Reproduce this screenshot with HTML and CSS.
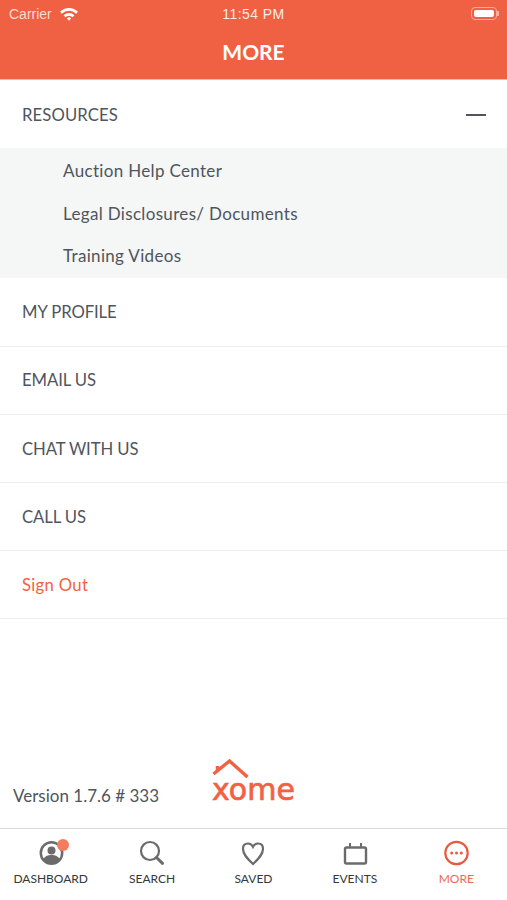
FILE: index.html
```html
<!DOCTYPE html>
<html>
	<head>
		<title>More</title>
		<link rel="stylesheet" href="styles.css">
	</head>
	<body>
		<div class="page">
			<header class="top">
				<div class="status">
					<div class="carrier">
						<span>Carrier</span>
						<svg class="wifi" width="18" height="14" viewBox="0 0 18 14">
							<path d="M0 4.800a12.500 12.500 0 0 1 18 0l-1.800 1.900a10 10 0 0 0-14.400 0z" fill="#fff"/>
							<path d="M3.600 8.300a7.500 7.500 0 0 1 10.800 0l-1.800 1.900a5 5 0 0 0-7.200 0z" fill="#fff"/>
							<path d="M6.900 11.400a3 3 0 0 1 4.200 0L9 13.700z" fill="#fff"/>
						</svg>
					</div>
					<div class="clock">11:54 PM</div>
					<div class="battery"><i></i></div>
				</div>
				<h1>MORE</h1>
			</header>

			<main class="menu">
				<div class="row row-open">
					<span>RESOURCES</span>
					<span class="minus"></span>
				</div>
				<div class="sub">
					<div class="sub-item">Auction Help Center</div>
					<div class="sub-item">Legal Disclosures/ Documents</div>
					<div class="sub-item">Training Videos</div>
				</div>
				<div class="row">MY PROFILE</div>
				<div class="row">EMAIL US</div>
				<div class="row">CHAT WITH US</div>
				<div class="row">CALL US</div>
				<div class="row signout">Sign Out</div>
			</main>

			<div class="about">
				<div class="version">Version 1.7.6 # 333</div>
				<div class="logo">
					<svg class="roof" width="38" height="20" viewBox="0 0 38 20">
						<path d="M1.500 15L17.500 2L35.500 18" fill="none" stroke="#f26144" stroke-width="3.400"/>
						<path d="M5.500 12.500V7" fill="none" stroke="#f26144" stroke-width="3.500"/>
					</svg>
					<div class="logo-word">xome</div>
				</div>
			</div>

			<nav class="tabs">
				<div class="tab">
					<span class="tab-icon">
						<svg width="30" height="30" viewBox="0 0 30 30">
							<circle cx="15.500" cy="15" r="10.700" fill="none" stroke="#6b6b6b" stroke-width="2.500"/>
							<circle cx="15.500" cy="12.500" r="4" fill="#6b6b6b"/>
							<path d="M7 22c1.500-4 5-5 8.500-5s7 1 8.500 5a11 11 0 0 1-17 0z" fill="#6b6b6b"/>
						</svg>
						<span class="dot"></span>
					</span>
					<span>DASHBOARD</span>
				</div>
				<div class="tab">
					<span class="tab-icon">
						<svg width="30" height="30" viewBox="0 0 30 30">
							<circle cx="13" cy="13" r="9" fill="none" stroke="#6b6b6b" stroke-width="2.200"/>
							<path d="M19.500 19.500l6 5.800" fill="none" stroke="#6b6b6b" stroke-width="3" stroke-linecap="round"/>
						</svg>
					</span>
					<span>SEARCH</span>
				</div>
				<div class="tab">
					<span class="tab-icon">
						<svg width="30" height="30" viewBox="0 0 30 30">
							<path d="M15 26C8.500 20 5 16 5 10.800 5 7.300 7.200 5.500 10 5.500c2.300 0 4 1.200 5 3.300 1-2.100 2.700-3.300 5-3.300 2.800 0 5 1.800 5 5.300C25 16 21.500 20 15 26z" fill="none" stroke="#6b6b6b" stroke-width="2.200"/>
						</svg>
					</span>
					<span>SAVED</span>
				</div>
				<div class="tab">
					<span class="tab-icon">
						<svg width="30" height="30" viewBox="0 0 30 30">
							<rect x="5" y="9.500" width="21" height="16" rx="1.500" fill="none" stroke="#6b6b6b" stroke-width="2.400"/>
							<path d="M10 5v5M21 5v5" stroke="#6b6b6b" stroke-width="2"/>
						</svg>
					</span>
					<span>EVENTS</span>
				</div>
				<div class="tab tab-on">
					<span class="tab-icon">
						<svg width="30" height="30" viewBox="0 0 30 30">
							<circle cx="15.500" cy="15" r="11.200" fill="none" stroke="#e9593c" stroke-width="2.200"/>
							<circle cx="10.700" cy="15" r="1.500" fill="#e9593c"/>
							<circle cx="15.500" cy="15" r="1.500" fill="#e9593c"/>
							<circle cx="20.300" cy="15" r="1.500" fill="#e9593c"/>
						</svg>
					</span>
					<span>MORE</span>
				</div>
			</nav>
		</div>
	</body>
</html>
```

FILE: styles.css
```css
html, body{
	margin:0;
	padding:0;
}
body{
	background-color:#ffffff;
	font-family:"Lato","Noto Sans",sans-serif;
	color:#4f555c;
}
.page{
	display:flex;
	flex-direction:column;
	height:900px;
}
.top{
	background-color:#f06042;
	color:#ffffff;
	height:79px;
	flex:none;
	border-bottom:1px solid #f7b5a6;
}
.status{
	display:grid;
	grid-template-columns:1fr auto 1fr;
	align-items:center;
	height:27px;
	padding:0 9px;
	font-family:"Liberation Sans",sans-serif;
	font-size:14px;
}
.carrier{
	display:flex;
	align-items:center;
	gap:8px;
	color:#fbdcd4;
}
.clock{
	letter-spacing:0.45px;
	color:#fdeee9;
}
.battery{
	position:relative;
	justify-self:end;
	width:26px;
	height:13px;
	margin-right:1px;
	padding:2px;
	box-sizing:border-box;
	border:1px solid #f9ad9c;
	border-radius:4px;
}
.battery::after{
	content:"";
	position:absolute;
	top:3px;
	right:-3px;
	width:2px;
	height:5px;
	background-color:#f9ad9c;
}
.battery i{
	display:block;
	height:100%;
	background-color:#ffffff;
	border-radius:2px;
}
h1{
	margin:0;
	text-align:center;
	font-size:21px;
	line-height:50px;
	font-weight:700;
}
.menu{
	flex:none;
}
.row{
	display:flex;
	align-items:center;
	justify-content:space-between;
	height:68.1px;
	box-sizing:border-box;
	padding:0 21px 0 22px;
	font-size:16.700px;
	letter-spacing:-0.1px;
	border-bottom:1px solid #eceeef;
}
.row-open{
	height:68px;
	padding-top:1px;
	letter-spacing:0.1px;
	border-bottom:none;
}
.minus{
	width:20px;
	height:2px;
	background-color:#4f555c;
}
.sub{
	background-color:#f5f6f6;
	height:130px;
	margin-bottom:0.8px;
	padding:2px 0 0;
	box-sizing:border-box;
}
.sub-item{
	height:42.700px;
	line-height:42px;
	padding-left:63px;
	font-size:17px;
	letter-spacing:0.33px;
}
.signout{
	color:#f26144;
	letter-spacing:0.3px;
}
.about{
	flex:1;
	display:flex;
	align-items:flex-end;
	padding:0 0 22px 13px;
}
.version{
	font-size:17px;
	width:199px;
	line-height:20px;
}
.logo{
	display:flex;
	flex-direction:column;
	margin-bottom:4px;
}
.roof{
	margin-bottom:-1px;
}
.logo-word{
	font-family:"DejaVu Sans",sans-serif;
	font-size:30px;
	line-height:24px;
	color:#f26144;
	-webkit-text-stroke:0.7px #f26144;
}
.tabs{
	flex:none;
	display:grid;
	grid-template-columns:repeat(5,1fr);
	height:72px;
	box-sizing:border-box;
	border-top:1px solid #d9d9d9;
	padding-top:9px;
	font-size:12px;
	color:#33383c;
}
.tab{
	display:flex;
	flex-direction:column;
	align-items:center;
	gap:3px;
}
.tab-icon{
	position:relative;
	display:block;
	width:30px;
	height:30px;
}
.dot{
	position:absolute;
	top:1px;
	right:-3px;
	width:12px;
	height:12px;
	border-radius:50%;
	background-color:#f67a5e;
}
.tab-on{
	color:#ee6a4f;
}
```
